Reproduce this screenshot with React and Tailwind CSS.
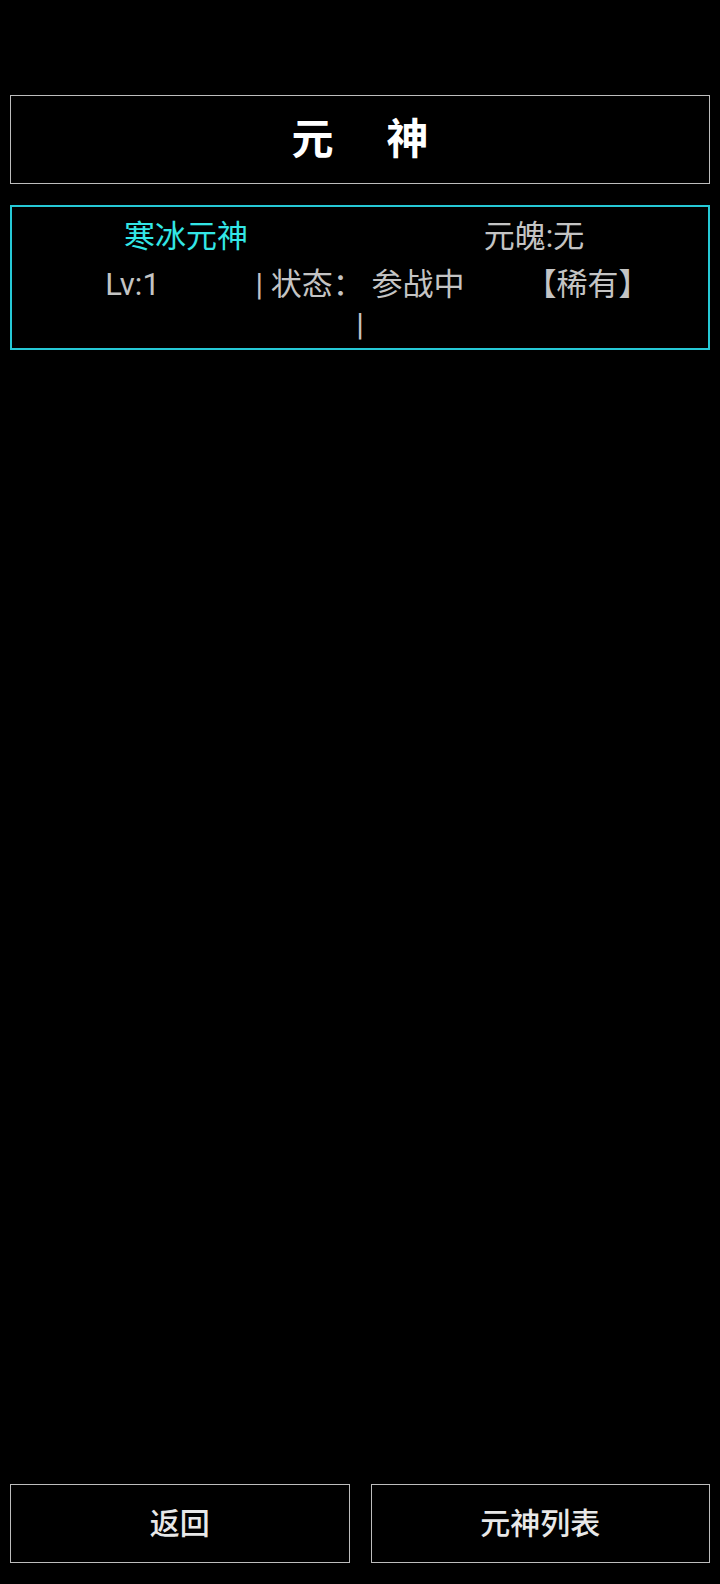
import React from "react";

const font = { fontFamily: '"Roboto", "Noto Sans CJK SC", sans-serif' };

const SoulCard = ({ name, soul, level, status, rarity }) => {
    return (
        <div className="mx-[10px] mt-[21px] h-[145px] border-2 border-[#26c9d6] pt-[9px]">
            <div className="grid grid-cols-2 text-[31px] leading-[41px]">
                <div className="text-center text-[#33e6e6]">{name}</div>
                <div className="text-center text-[#c4c4c4]">{soul}</div>
            </div>
            <div className="mt-[8px] grid grid-cols-[1fr_214px_1fr] text-[31px] leading-[40px] text-[#c4c4c4]">
                <div className="text-center">{level}</div>
                <div className="text-center">| 状态： {status} |</div>
                <div className="text-center">{rarity}</div>
            </div>
        </div>
    );
};

export default function App() {
    return (
        <div className="min-h-[1584px] bg-black flex flex-col" style={font}>
            {/* title */}
            <div className="mx-[10px] mt-[95px] h-[89px] border border-[#bdbdbd] flex items-center justify-center gap-[53px] text-[42px] font-bold text-white">
                <span>元</span>
                <span>神</span>
            </div>

            <SoulCard name="寒冰元神" soul="元魄:无" level="Lv:1" status="参战中" rarity="【稀有】" />

            {/* bottom buttons */}
            <div className="mt-auto mb-[21px] px-[10px] grid grid-cols-2 gap-[21px]">
                <button className="h-[79px] border border-[#bdbdbd] text-[30px] font-medium text-[#e8e8e8]">
                    返回
                </button>
                <button className="h-[79px] border border-[#bdbdbd] text-[30px] font-medium text-[#e8e8e8]">
                    元神列表
                </button>
            </div>
        </div>
    );
}
